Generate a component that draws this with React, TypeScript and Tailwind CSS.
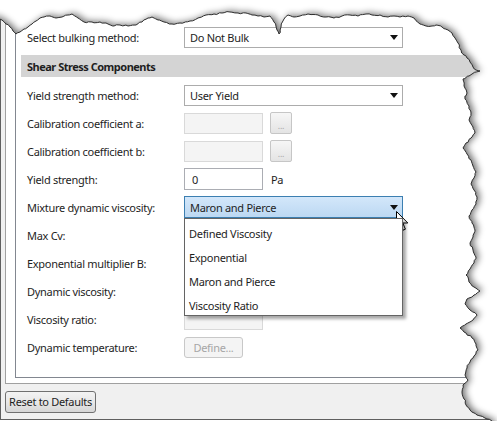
import React from 'react';

type Pt = [number, number];

// key points of the torn edge, top-left to bottom-right
const EDGE: Pt[] = [
  [-5, 17], [2, 20], [6, 24], [10, 27], [13, 31], [16, 34], [20, 32], [24, 29], [28, 27], [32, 24],
  [36, 21], [40, 18], [44, 17], [50, 16], [56, 18], [62, 17], [68, 15], [72, 14], [78, 18], [84, 22],
  [92, 22], [100, 22], [108, 24], [114, 26], [120, 25], [128, 26], [136, 25], [142, 22], [148, 18],
  [152, 17], [158, 20], [164, 22], [172, 24], [180, 23], [190, 21], [198, 18], [206, 15], [214, 14],
  [222, 13], [230, 12], [238, 13], [246, 13], [252, 15], [258, 16], [264, 17], [270, 16], [274, 22],
  [277, 30], [279, 34], [281, 27], [284, 19], [288, 15], [294, 17], [300, 16], [308, 14], [318, 15],
  [326, 17], [334, 18], [342, 16], [350, 15], [358, 16], [366, 14], [372, 15], [380, 15], [388, 17],
  [394, 16], [400, 17], [408, 16], [414, 18], [420, 24], [426, 26], [432, 26], [436, 25], [442, 27],
  [448, 30], [452, 33], [455, 38], [458, 43], [461, 50], [464, 55], [467, 58], [470, 62], [473, 67],
  [476, 70], [480, 71], [472, 74], [463, 79], [464, 86], [467, 93], [465, 99], [469, 106], [471, 113],
  [469, 120], [473, 127], [475, 133], [471, 138], [466, 143], [463, 148], [467, 154], [471, 160],
  [473, 166], [476, 172], [474, 178], [471, 184], [474, 190], [477, 197], [476, 204], [472, 210],
  [469, 216], [472, 223], [475, 230], [473, 237], [470, 243], [473, 250], [476, 257], [474, 263],
  [470, 269], [466, 275], [469, 282], [474, 287], [480, 291], [474, 295], [467, 299], [465, 304],
  [470, 310], [477, 315], [473, 320], [466, 324], [460, 328], [466, 333], [472, 338], [476, 344],
  [478, 350], [474, 356], [470, 362], [467, 368], [465, 375], [468, 380], [463, 385], [462, 392],
  [464, 399], [466, 405], [470, 410], [477, 415], [487, 419], [492, 421],
];

function roughen(pts: Pt[]): Pt[] {
  let seed = 7;
  const rnd = () => {
    seed = (seed * 9301 + 49297) % 233280;
    return seed / 233280 - 0.5;
  };
  const out: Pt[] = [];
  for (let i = 0; i < pts.length - 1; i++) {
    const [x1, y1] = pts[i];
    const [x2, y2] = pts[i + 1];
    const steps = Math.max(1, Math.round(Math.hypot(x2 - x1, y2 - y1) / 2.5));
    for (let s = 0; s < steps; s++) {
      const t = s / steps;
      const j = s === 0 ? 0 : 1.6;
      out.push([x1 + (x2 - x1) * t + rnd() * j, y1 + (y2 - y1) * t + rnd() * j]);
    }
  }
  out.push(pts[pts.length - 1]);
  return out;
}

const edge = roughen(EDGE);
const edgeStr = edge.map(([x, y]) => `${x.toFixed(1)},${y.toFixed(1)}`).join(' ');
const outside = `M${edgeStr} L520,421 L520,-20 L-20,-20 L-20,17 Z`;
const inside = `M${edgeStr} L492,440 L-20,440 L-20,17 Z`;

const TornEdge = () => (
  <svg className="absolute inset-0 pointer-events-none" width="497" height="421" viewBox="0 0 497 421">
    <defs>
      <filter id="blur" x="-20%" y="-20%" width="140%" height="140%">
        <feGaussianBlur stdDeviation="3.5" />
      </filter>
      <clipPath id="out">
        <path d={outside} />
      </clipPath>
    </defs>
    <path d={outside} fill="#ffffff" />
    <g clipPath="url(#out)">
      <path d={inside} fill="#000" opacity="0.55" filter="url(#blur)" transform="translate(3,-1)" />
    </g>
    <polyline points={edgeStr} fill="none" stroke="#2e2e2e" strokeWidth="1" />
  </svg>
);

const Arrow = () => (
  <svg width="8" height="5" viewBox="0 0 8 5" className="shrink-0">
    <path d="M0 0 L8 0 L4 5 Z" fill="#111" />
  </svg>
);

const Combo = ({ value, active }: { value: string; active?: boolean }) => (
  <div
    className={
      active
        ? 'w-[219px] h-[22px] flex items-center justify-between pl-[5px] pr-[4px] border border-[#3c7fb1] bg-gradient-to-b from-[#d3e7fa] to-[#bcd8f2]'
        : 'w-[219px] h-[21px] flex items-center justify-between pl-[5px] pr-[4px] border border-[#acacac] bg-white'
    }
  >
    <span>{value}</span>
    <Arrow />
  </div>
);

const Disabled = () => <div className="w-[79px] h-[21px] border border-[#d9d9d9] bg-[#f4f4f4]" />;

const Dots = () => (
  <div className="ml-[7px] w-[22px] h-[22px] rounded-[2px] border border-[#c6c6c6] bg-gradient-to-b from-[#f6f6f6] to-[#e4e4e4] flex items-end justify-center pb-[3px] text-[9px] leading-none text-[#a8a8a8]">
    ...
  </div>
);

const Row = ({ label, children }: { label: string; children?: React.ReactNode }) => (
  <div className="h-[28px] flex items-center px-[6px]">
    <div className="w-[157px] shrink-0">{label}</div>
    {children}
  </div>
);

const Cursor = () => (
  <svg className="absolute left-[396px] top-[211px] pointer-events-none" width="13" height="21" viewBox="0 0 13 21">
    <path d="M0.5 0.5 L0.5 16.5 L4.3 12.8 L7 19.2 L9.4 18.2 L6.8 12 L11.8 12 Z" fill="#fff" stroke="#000" strokeWidth="1" strokeLinejoin="round" />
  </svg>
);

export default function App() {
  const options = ['Defined Viscosity', 'Exponential', 'Maron and Pierce', 'Viscosity Ratio'];
  return (
    <div
      className="relative w-[497px] h-[421px] bg-white overflow-hidden text-[11px] tracking-[-0.3px] text-[#1e1e1e] leading-none"
      style={{ fontFamily: '"Noto Sans", "Open Sans", sans-serif' }}
    >
      <div className="h-[420px] flex flex-col border-l border-b border-[#5f5f5f] bg-[#f0f0f0]">
        {/* white content area */}
        <div className="ml-[4px] h-[384px] bg-white border-l border-b border-[#a0a0a0] pl-[9px] pb-[5px]">
          <div className="h-full border-l border-b border-[#828790] pl-[5px] pt-[23px]">
            <Row label="Select bulking method:">
              <Combo value="Do Not Bulk" />
            </Row>
            <div className="mt-[4px] h-[22px] bg-[#d4d4d4] flex items-center px-[6px] font-bold tracking-[-0.5px] mb-[4px]">
              Shear Stress Components
            </div>
            <Row label="Yield strength method:">
              <Combo value="User Yield" />
            </Row>
            <Row label="Calibration coefficient a:">
              <Disabled />
              <Dots />
            </Row>
            <Row label="Calibration coefficient b:">
              <Disabled />
              <Dots />
            </Row>
            <Row label="Yield strength:">
              <div className="w-[79px] h-[22px] border border-[#abadb3] bg-white flex items-center pl-[7px]">0</div>
              <span className="ml-[8px]">Pa</span>
            </Row>
            <Row label="Mixture dynamic viscosity:">
              <div className="relative">
                <Combo value="Maron and Pierce" active />
                <div className="absolute left-0 top-[22px] z-10 w-[219px] bg-white border border-[#646464] shadow-[3px_3px_3px_rgba(0,0,0,0.35)]">
                  {options.map((o) => (
                    <div key={o} className="h-[24px] flex items-center pt-[5px] pl-[4px]">
                      {o}
                    </div>
                  ))}
                </div>
              </div>
            </Row>
            <Row label="Max Cv:">
              <Disabled />
            </Row>
            <Row label="Exponential multiplier B:">
              <Disabled />
            </Row>
            <Row label="Dynamic viscosity:">
              <Disabled />
            </Row>
            <Row label="Viscosity ratio:">
              <Disabled />
            </Row>
            <Row label="Dynamic temperature:">
              <div className="w-[59px] h-[21px] rounded-[3px] border border-[#c8c8c8] bg-[#f4f4f4] flex items-center justify-center text-[#a6a6a6]">
                Define...
              </div>
            </Row>
          </div>
        </div>
        {/* footer */}
        <div className="flex-1 flex items-center pl-[4px]">
          <button className="h-[22px] w-[91px] whitespace-nowrap rounded-[3px] border border-[#707070] bg-gradient-to-b from-[#f3f3f3] via-[#e8e8e8] to-[#d6d6d6] text-[#1e1e1e] flex items-center justify-center">
            Reset to Defaults
          </button>
        </div>
      </div>
      <Cursor />
      <TornEdge />
    </div>
  );
}
